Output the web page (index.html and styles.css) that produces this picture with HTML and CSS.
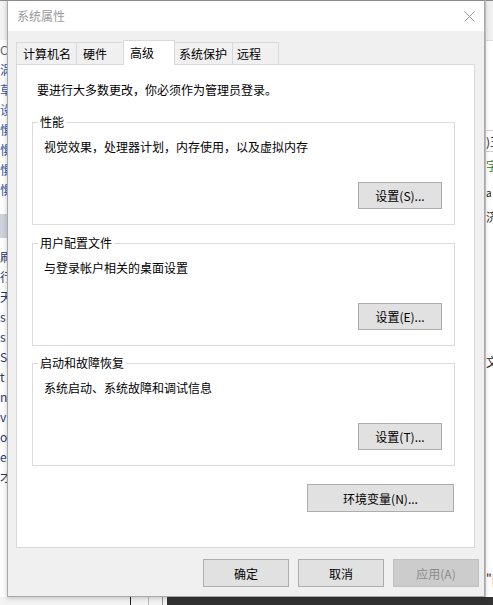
FILE: index.html
```html
<!DOCTYPE html>
<html lang="zh-CN">
<head>
<meta charset="utf-8">
<title>系统属性</title>
<link rel="stylesheet" href="styles.css">
</head>
<body>
<div class="screen">
  <div class="bg-left">
    <div class="lhead"></div>
    <div class="r gray">C</div>
    <div class="r">涡</div>
    <div class="r">草</div>
    <div class="r">设</div>
    <div class="r">惧</div>
    <div class="r">惧</div>
    <div class="r">惧</div>
    <div class="r">惧</div>
    <div class="sp14"></div>
    <div class="sel"></div>
    <div class="sp9"></div>
    <div class="r dark">刷</div>
    <div class="r dark">行</div>
    <div class="r dark">天</div>
    <div class="r dark">s</div>
    <div class="r dark">s</div>
    <div class="r dark">S</div>
    <div class="r dark">t</div>
    <div class="r dark">n</div>
    <div class="r dark">v</div>
    <div class="r dark">o</div>
    <div class="r dark">e</div>
    <div class="r dark">才</div>
  </div>

  <div class="dialog">
    <div class="titlebar">
      <span class="title">系统属性</span>
      <svg class="close" width="11" height="11" viewBox="0 0 11 11"><path d="M0.5 0.5 L10.5 10.5 M10.5 0.5 L0.5 10.5" stroke="#9a9a9a" stroke-width="1" fill="none"/></svg>
    </div>
    <div class="body">
      <div class="tabs">
        <div class="tab t1">计算机名</div>
        <div class="tab t2">硬件</div>
        <div class="tab active">高级</div>
        <div class="tab t4">系统保护</div>
        <div class="tab t5">远程</div>
      </div>
      <div class="panel">
        <p class="intro">要进行大多数更改，你必须作为管理员登录。</p>
        <fieldset class="group">
          <legend>性能</legend>
          <p class="desc">视觉效果，处理器计划，内存使用，以及虚拟内存</p>
          <div class="btn-row"><button class="btn set">设置(S)...</button></div>
        </fieldset>
        <fieldset class="group">
          <legend>用户配置文件</legend>
          <p class="desc">与登录帐户相关的桌面设置</p>
          <div class="btn-row"><button class="btn set">设置(E)...</button></div>
        </fieldset>
        <fieldset class="group g3">
          <legend>启动和故障恢复</legend>
          <p class="desc">系统启动、系统故障和调试信息</p>
          <div class="btn-row"><button class="btn set">设置(T)...</button></div>
        </fieldset>
        <div class="env-row"><button class="btn env">环境变量(N)...</button></div>
      </div>
      <div class="footer">
        <button class="btn foot">确定</button>
        <button class="btn foot">取消</button>
        <button class="btn foot" disabled>应用(A)</button>
      </div>
    </div>
  </div>

  <div class="bg-right">
    <div class="rhead"></div>
    <div class="rsp1"></div>
    <div class="rrow lined">)王</div>
    <div class="rrow green">字</div>
    <div class="rrow small">a</div>
    <div class="rrow">济</div>
    <div class="rsp2"></div>
    <div class="rrow">文</div>
    <div class="rsp3"></div>
    <div class="rrow">"|</div>
  </div>

  <div class="bottom">
    <div class="seg-a"></div>
    <div class="ln ln1"></div>
    <div class="seg-b"></div>
    <div class="ln ln2"></div>
    <div class="seg-c"></div>
    <div class="ln ln3"></div>
    <div class="seg-d"></div>
    <div class="seg-dark"></div>
  </div>
</div>
</body>
</html>
```

FILE: styles.css
```css
* { box-sizing: border-box; }
html, body { margin: 0; padding: 0; }
body {
  font-family: "Noto Sans CJK SC", "Microsoft YaHei", sans-serif;
  font-size: 12px;
  color: #000;
  background: #fff;
}
.screen {
  width: 493px;
  height: 605px;
  display: grid;
  grid-template-columns: 7px 478px 8px;
  grid-template-rows: 597px 8px;
  overflow: hidden;
}

/* background window (left) */
.bg-left {
  border-top: 1px solid #8a8a8a;
  background: #fff;
  overflow: hidden;
  display: flex;
  flex-direction: column;
  white-space: nowrap;
}
.lhead { height: 39px; background: #f3f3f3; flex: none; }
.bg-left .r { height: 20px; line-height: 20px; color: #2a58a8; flex: none; }
.bg-left .r.gray { color: #666; }
.bg-left .r.dark { color: #1d3b6e; }
.sp14 { height: 14px; flex: none; }
.sp9 { height: 9px; flex: none; }
.sel { height: 24px; background: #cdd3dc; flex: none; }

/* dialog */
.dialog {
  position: relative;
  z-index: 1;
  border: 1px solid #a8a8a8;
  border-top-color: #8a8a8a;
  background: #f0f0f0;
  display: flex;
  flex-direction: column;
  box-shadow: 0 1px 5px rgba(0, 0, 0, 0.22);
}
.titlebar {
  height: 30px;
  flex: none;
  background: #fff;
  display: flex;
  align-items: center;
  justify-content: space-between;
  padding: 0 9px;
}
.title { color: #9a9a9a; line-height: 16px; }
.close { display: block; }

.body {
  flex: 1;
  padding: 9px 5px 9px 8px;
  display: flex;
  flex-direction: column;
}
.tabs {
  display: flex;
  align-items: flex-end;
  height: 24px;
  flex: none;
  position: relative;
  z-index: 1;
}
.tab {
  height: 22px;
  line-height: 21px;
  border: 1px solid #d9d9d9;
  border-bottom: 0;
  border-right: 0;
  background: #f0f0f0;
  padding-left: 6px;
  white-space: nowrap;
}
.t1 { width: 60px; }
.t2 { width: 47px; }
.tab.active {
  width: 52px;
  height: 25px;
  line-height: 23px;
  margin-bottom: -1px;
  background: #fff;
  border-right: 1px solid #d9d9d9;
}
.t4 { width: 57px; border-left: 0; padding-left: 4px; }
.t5 { width: 47px; border-right: 1px solid #d9d9d9; padding-left: 4px; }

.panel {
  width: 459px;
  height: 484px;
  flex: none;
  background: #fff;
  border: 1px solid #d9d9d9;
  padding: 17px 0 0 15px;
}
.intro { margin: 0 0 0 5px; line-height: 16px; }

.group {
  margin: 16px 0 0 0;
  padding: 0;
  border: 1px solid #dcdcdc;
  width: 423px;
  min-width: 0;
}
.group + .group { margin-top: 10px; }
.group.g3 { margin-top: 9px; }
.group legend {
  margin-left: 5px;
  padding: 0 2px;
  line-height: 16px;
}
.desc { margin: 9px 0 0 11px; line-height: 16px; }
.btn-row {
  display: flex;
  justify-content: flex-end;
  margin-top: 27px;
  padding: 0 12px 15px 0;
}

.btn {
  font-family: inherit;
  font-size: 12px;
  color: #000;
  background: #e1e1e1;
  border: 1px solid #adadad;
  padding: 0;
  margin: 0;
  border-radius: 0;
}
.btn.set { width: 84px; height: 27px; }
.env-row {
  width: 423px;
  display: flex;
  justify-content: flex-end;
  margin-top: 18px;
  padding-right: 1px;
}
.btn.env { width: 147px; height: 28px; }

.footer {
  display: flex;
  justify-content: flex-end;
  gap: 9px;
  margin-top: 11px;
}
.btn.foot { width: 86px; height: 28px; }
.btn:disabled {
  background: #cccccc;
  border-color: #bfbfbf;
  color: #8a8a8a;
}

/* background window (right) */
.bg-right {
  border-top: 1px solid #8a8a8a;
  border-left: 1px solid #cfcfcf;
  background: #fff;
  overflow: hidden;
  display: flex;
  flex-direction: column;
  white-space: nowrap;
}
.rhead { height: 40px; background: #f0f0f0; border-bottom: 1px solid #dcdcdc; flex: none; }
.rsp1 { height: 89px; flex: none; }
.rsp2 { height: 123px; flex: none; }
.rsp3 { height: 195px; flex: none; }
.rrow { height: 22px; line-height: 22px; color: #222; flex: none; }
.rrow.lined { border-top: 1px solid #cfcfcf; border-bottom: 1px solid #cfcfcf; }
.rrow.green { color: #2e7d32; height: 27px; line-height: 27px; }
.rrow.small { font-size: 10px; height: 27px; line-height: 27px; }

/* bottom strip */
.bottom { grid-column: 1 / -1; display: flex; }
.seg-a { width: 130px; background: #f3f3f3; }
.seg-b { width: 17px; background: #f3f3f3; }
.seg-c { width: 13px; background: #f3f3f3; }
.seg-d { width: 4px; background: #f3f3f3; }
.ln { width: 1px; }
.ln1 { background: #222; }
.ln2 { background: #bbb; }
.ln3 { background: #999; }
.seg-dark { flex: 1; background: #333; }
```
